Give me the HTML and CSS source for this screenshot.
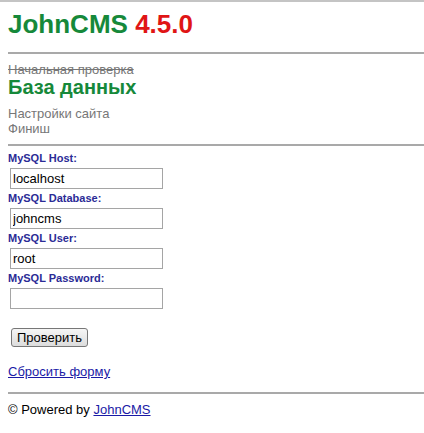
FILE: index.html
```html
<!DOCTYPE html>
<html lang="ru">
  <head>
    <meta charset="UTF-8" />
    <title>JohnCMS 4.5.0</title>
    <link rel="stylesheet" href="styles.css">
  </head>
  <body>
    <div class="header">
      <span class="name">JohnCMS</span> <span class="version">4.5.0</span>
    </div>
    <hr>
    <div class="steps">
      <div class="step done">Начальная проверка</div>
      <div class="step current">База данных</div>
      <div class="step">Настройки сайта</div>
      <div class="step">Финиш</div>
    </div>
    <hr>
    <form class="install" action="#" method="post">
      <div class="field">
        <label for="dbhost">MySQL Host:</label>
        <input type="text" id="dbhost" name="dbhost" value="localhost">
      </div>
      <div class="field">
        <label for="dbname">MySQL Database:</label>
        <input type="text" id="dbname" name="dbname" value="johncms">
      </div>
      <div class="field">
        <label for="dbuser">MySQL User:</label>
        <input type="text" id="dbuser" name="dbuser" value="root">
      </div>
      <div class="field">
        <label for="dbpass">MySQL Password:</label>
        <input type="password" id="dbpass" name="dbpass" value="">
      </div>
      <button type="submit" class="btn">Проверить</button>
      <div class="reset"><a href="#">Сбросить форму</a></div>
    </form>
    <hr>
    <div class="footer">&copy; Powered by <a href="#">JohnCMS</a></div>
  </body>
</html>
```

FILE: styles.css
```css
html {
  background: #fff;
  overflow: hidden;
}

body {
  margin: 0;
  padding: 0 0 0 8px;
  border-top: 2px solid #c4c4c4;
  font-family: "Liberation Sans", Arial, sans-serif;
  font-size: 13px;
  color: #000;
}

hr {
  height: 0;
  border: 0;
  border-top: 2px solid #a9a9a9;
  margin: 0;
}

a {
  color: #1a1aa6;
}

/* header */
.header {
  padding-top: 7px;
  margin-bottom: 13px;
  font-size: 26px;
  font-weight: bold;
  line-height: 30px;
}

.name {
  color: #16893a;
}

.version {
  color: #e01515;
}

/* install steps */
.steps {
  padding: 8px 0;
}

.step {
  color: #777;
  line-height: 15px;
}

.step.done {
  text-decoration: line-through;
}

.step.current {
  color: #16893a;
  font-size: 20px;
  font-weight: bold;
  line-height: 20px;
  margin-bottom: 9px;
}

/* form */
.install {
  padding-top: 6px;
  padding-bottom: 13px;
}

.field label {
  display: block;
  color: #2b2b96;
  font-size: 11px;
  font-weight: bold;
  line-height: 13px;
}

.field input {
  display: block;
  box-sizing: border-box;
  width: 153px;
  height: 21px;
  margin: 3px 0 3px 2px;
  padding: 0 2px;
  border: 1px solid #a5a5a5;
  font-family: "Liberation Sans", Arial, sans-serif;
  font-size: 13px;
  color: #000;
}

.btn {
  display: block;
  box-sizing: border-box;
  width: 77px;
  height: 19px;
  margin: 19px 0 0 3px;
  padding: 0;
  border: 1px solid #777;
  border-radius: 3px;
  background: linear-gradient(#f6f6f6, #dcdcdc);
  font-family: "Liberation Sans", Arial, sans-serif;
  font-size: 13px;
  color: #000;
}

.reset {
  margin-top: 17px;
  line-height: 15px;
}

.footer {
  padding-top: 8px;
  line-height: 15px;
}
```
